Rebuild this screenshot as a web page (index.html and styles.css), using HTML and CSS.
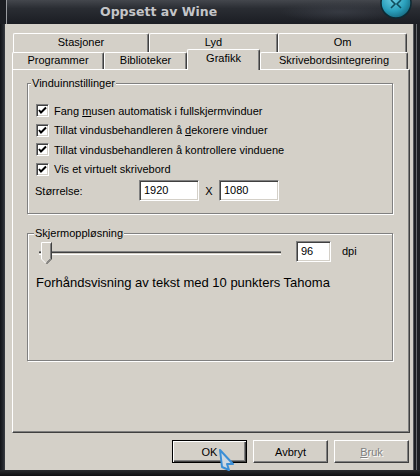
FILE: index.html
```html
<!DOCTYPE html>
<html lang="nb">
<head>
  <meta charset="UTF-8">
  <title>Oppsett av Wine</title>
  <link rel="stylesheet" href="styles.css">
</head>
<body>
  <div class="window">
    <div class="titlebar">
      <span class="title">Oppsett av Wine</span>
      <span class="close">
        <svg width="32" height="32" viewBox="0 0 32 32">
          <defs>
            <radialGradient id="cg" cx="0.4" cy="0.35" r="0.7">
              <stop offset="0" stop-color="#6fd0e4"/>
              <stop offset="0.6" stop-color="#2aa0bc"/>
              <stop offset="1" stop-color="#15667c"/>
            </radialGradient>
          </defs>
          <circle cx="16" cy="16" r="15" fill="url(#cg)" stroke="#0d2a33" stroke-width="1.5"/>
          <path d="M11 13 L15 17 L11 21 M21 13 L17 17 L21 21" fill="none" stroke="#0f4c5c" stroke-width="1.6"/>
        </svg>
      </span>
    </div>

    <div class="frame">
      <div class="edge-left"></div>
      <div class="client">
        <div class="tabs">
          <div class="tab-row back">
            <div class="tab" style="width:136px">Stasjoner</div>
            <div class="tab" style="width:129px">Lyd</div>
            <div class="tab" style="width:129px">Om</div>
          </div>
          <div class="tab-row front">
            <div class="tab" style="width:92px">Programmer</div>
            <div class="tab" style="width:83px">Biblioteker</div>
            <div class="tab selected" style="width:73px">Grafikk</div>
            <div class="tab" style="width:148px">Skrivebordsintegrering</div>
          </div>
        </div>

        <div class="panel">
          <div class="group group-window">
            <span class="group-title">Vinduinnstillinger</span>
            <label class="check first">
              <span class="box"><svg width="9" height="9" viewBox="0 0 9 9"><path d="M1 4 L3 6.5 L8 1.5" fill="none" stroke="#000" stroke-width="2"/></svg></span>
              <span>Fang <u>m</u>usen automatisk i fullskjermvinduer</span>
            </label>
            <label class="check">
              <span class="box"><svg width="9" height="9" viewBox="0 0 9 9"><path d="M1 4 L3 6.5 L8 1.5" fill="none" stroke="#000" stroke-width="2"/></svg></span>
              <span>Tillat vindusbehandleren å <u>d</u>ekorere vinduer</span>
            </label>
            <label class="check">
              <span class="box"><svg width="9" height="9" viewBox="0 0 9 9"><path d="M1 4 L3 6.5 L8 1.5" fill="none" stroke="#000" stroke-width="2"/></svg></span>
              <span>Tillat vindusbehandleren å kontrollere vinduene</span>
            </label>
            <label class="check">
              <span class="box"><svg width="9" height="9" viewBox="0 0 9 9"><path d="M1 4 L3 6.5 L8 1.5" fill="none" stroke="#000" stroke-width="2"/></svg></span>
              <span>Vis et virtuelt skrivebord</span>
            </label>
            <div class="size-row">
              <span class="size-label">Størrelse:</span>
              <span class="field wide">1920</span>
              <span class="times">X</span>
              <span class="field wide">1080</span>
            </div>
          </div>

          <div class="group group-dpi">
            <span class="group-title">Skjermoppløsning</span>
            <div class="dpi-row">
              <svg class="slider" width="248" height="24" viewBox="0 0 248 24">
                <rect x="3" y="9" width="242" height="1" fill="#808080"/>
                <rect x="3" y="10" width="242" height="1" fill="#404040"/>
                <rect x="3" y="11" width="242" height="1" fill="#d4d0c8"/>
                <rect x="3" y="12" width="242" height="1" fill="#ffffff"/>
                <path d="M5.5 0.5 H15.5 V17 L10.5 22 L5.5 17 Z" fill="#d4d0c8"/>
                <path d="M5.5 17 V0.5 H15" fill="none" stroke="#ffffff"/>
                <path d="M15.5 0.5 V17 L10.5 22" fill="none" stroke="#404040"/>
                <path d="M14.5 1.5 V16.6 L10.5 20.6" fill="none" stroke="#808080"/>
                <path d="M5.5 17 L9.5 21" fill="none" stroke="#ffffff"/>
              </svg>
              <span class="field narrow">96</span>
              <span class="unit">dpi</span>
            </div>
            <p class="preview">Forhåndsvisning av tekst med 10 punkters Tahoma</p>
          </div>
        </div>

        <div class="buttons">
          <button class="default">OK</button>
          <button>Avbryt</button>
          <button class="disabled"><u>B</u>ruk</button>
        </div>
      </div>
      <div class="edge-right"></div>
    </div>
    <div class="edge-bottom"></div>

    <svg class="cursor" width="18" height="24" viewBox="0 0 18 24">
      <path d="M2 2 L15 16 L9 16 L11 22 L4 19 Z" fill="#cfd8e0" stroke="#3c8fd6" stroke-width="2" stroke-linejoin="round"/>
    </svg>
  </div>
</body>
</html>
```

FILE: styles.css
```css
body {
  margin: 0;
  background-color: #15171b;
  font-family: 'Liberation Sans', Arial, sans-serif;
  font-size: 11px;
  color: #000000;
}

.window {
  position: relative;
  width: 420px;
  height: 476px;
  overflow: hidden;
}

.titlebar {
  display: flex;
  align-items: flex-start;
  height: 24px;
  overflow: hidden;
  background: radial-gradient(ellipse 60px 10px at 340px 12px, rgba(70, 74, 84, 0.5), transparent),
              linear-gradient(#44474d 0, #2a2d33 35%, #1b1d23 100%);
  box-shadow: inset 6px 0 0 #1b1d22, inset 7px 0 0 #9a9ca0;
}

.title {
  padding-left: 100px;
  line-height: 24px;
  font-family: 'DejaVu Sans', sans-serif;
  font-weight: bold;
  font-size: 12.5px;
  letter-spacing: 0;
  color: #c4c5c8;
}

.close {
  margin-left: auto;
  margin-right: 8px;
  margin-top: -13px;
  height: 32px;
}

.frame {
  display: flex;
  height: 446px;
}

.edge-left {
  width: 5px;
  background: linear-gradient(90deg, #111316 0, #24272c 60%, #3a3d42 100%);
}

.edge-right {
  width: 7px;
  background: #1d1f23;
  box-shadow: inset 1px 0 0 #55575b, inset -3px 0 0 #1d1f23, inset -4px 0 0 #6a6c70;
}

.edge-bottom {
  height: 6px;
  background: linear-gradient(#2a2d31, #101114);
}

.client {
  width: 408px;
  background-color: #d4d0c8;
  padding-top: 9px;
  box-sizing: border-box;
}

/* tabs */
.tabs {
  height: 36px;
}

.tab-row {
  display: flex;
}

.tab-row.back {
  height: 19px;
  margin-left: 8px;
}

.tab-row.front {
  height: 17px;
  margin-left: 7px;
}

.tab {
  box-sizing: border-box;
  background-color: #d4d0c8;
  border-top: 1px solid #ffffff;
  border-left: 1px solid #ffffff;
  border-right: 1px solid #404040;
  box-shadow: inset -1px 0 0 #808080;
  border-radius: 2px 2px 0 0;
  text-align: center;
  line-height: 17px;
}

.tab-row.front .tab {
  line-height: 15px;
}

.tab-row.front .tab.selected {
  margin-top: -3px;
  height: 21px;
  line-height: 17px;
  z-index: 1;
}

/* page */
.panel {
  box-sizing: border-box;
  width: 398px;
  height: 364px;
  margin-left: 7px;
  border-top: 1px solid #ffffff;
  border-left: 1px solid #ffffff;
  border-right: 1px solid #404040;
  border-bottom: 1px solid #404040;
  box-shadow: inset -1px -1px 0 #808080;
  padding: 13px 0 0 14px;
}

.group {
  box-sizing: border-box;
  display: flex;
  flex-direction: column;
  align-items: flex-start;
  width: 366px;
  border: 1px solid #808080;
  box-shadow: inset 1px 1px 0 #ffffff, 1px 1px 0 #ffffff;
  padding-left: 8px;
}

.group-window {
  height: 131px;
}

.group-dpi {
  height: 128px;
  margin-top: 19px;
}

.group-title {
  margin-top: -7px;
  margin-left: -5px;
  padding: 0 1px;
  line-height: 13px;
  background-color: #d4d0c8;
}

.group-dpi .group-title {
  margin-left: -2px;
}

.check {
  display: flex;
  align-items: center;
  height: 19.5px;
  white-space: nowrap;
}

.check.first {
  margin-top: 11px;
}

.box {
  display: flex;
  align-items: center;
  justify-content: center;
  box-sizing: border-box;
  width: 13px;
  height: 13px;
  margin-right: 5px;
  background-color: #ffffff;
  border-top: 1px solid #808080;
  border-left: 1px solid #808080;
  border-right: 1px solid #ffffff;
  border-bottom: 1px solid #ffffff;
  box-shadow: inset 1px 1px 0 #404040, inset -1px -1px 0 #d4d0c8;
}

.size-row {
  display: flex;
  align-items: center;
  height: 21px;
  margin-top: 1px;
}

.size-label {
  width: 104px;
  margin-left: -1px;
}

.field {
  box-sizing: border-box;
  height: 21px;
  padding-left: 4px;
  line-height: 19px;
  background-color: #ffffff;
  border-top: 1px solid #808080;
  border-left: 1px solid #808080;
  border-right: 1px solid #ffffff;
  border-bottom: 1px solid #ffffff;
  box-shadow: inset 1px 1px 0 #404040, inset -1px -1px 0 #d4d0c8;
}

.field.wide {
  width: 60px;
}

.field.narrow {
  width: 35px;
}

.times {
  width: 20px;
  text-align: center;
}

.dpi-row {
  display: flex;
  align-items: flex-start;
  margin-top: 1px;
}

.slider {
  display: block;
  margin-top: 1px;
}

.dpi-row .field {
  margin-left: 12px;
}

.unit {
  margin-left: 11px;
  line-height: 21px;
}

.preview {
  margin: 9px 0 0;
  font-size: 13px;
  line-height: 16px;
}

/* dialog buttons */
.buttons {
  display: flex;
  justify-content: flex-end;
  gap: 6px;
  margin-top: 7px;
  padding-right: 4px;
}

button {
  box-sizing: border-box;
  width: 75px;
  height: 23px;
  padding: 0;
  font-family: 'Liberation Sans', Arial, sans-serif;
  font-size: 11px;
  color: #000000;
  background-color: #d4d0c8;
  border-top: 1px solid #ffffff;
  border-left: 1px solid #ffffff;
  border-right: 1px solid #404040;
  border-bottom: 1px solid #404040;
  box-shadow: inset -1px -1px 0 #808080;
}

button.default {
  border: 1px solid #000000;
  box-shadow: inset 1px 1px 0 #ffffff, inset -1px -1px 0 #404040, inset -2px -2px 0 #808080;
}

button.disabled {
  color: #808080;
  text-shadow: 1px 1px 0 #ffffff;
}

.cursor {
  position: absolute;
  left: 218px;
  top: 448px;
}
```
